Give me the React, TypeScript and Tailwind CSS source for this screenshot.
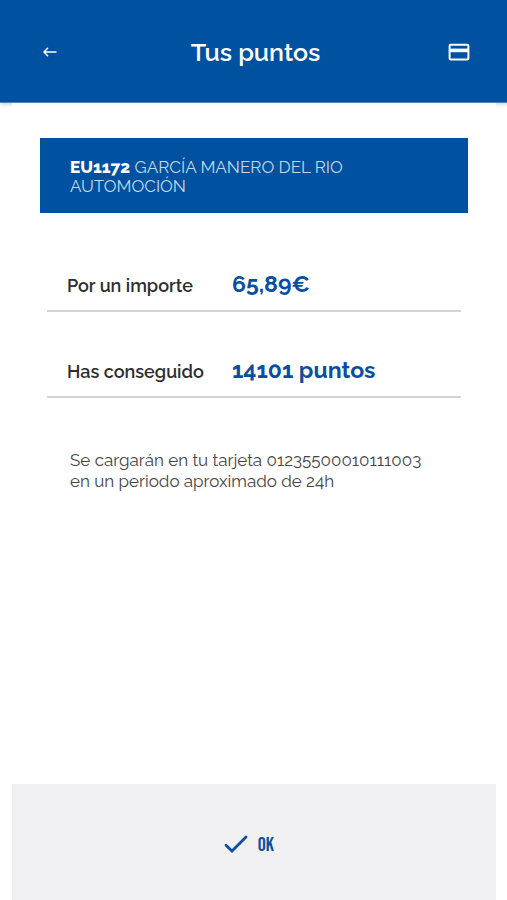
type AmountRowProps = {
  label: string;
  value: string;
};

function BackArrow() {
  return (
    <svg viewBox="0 0 14 12" className="h-3 w-3.5" fill="none" stroke="currentColor" strokeWidth="1.5" strokeLinecap="round" strokeLinejoin="round" aria-hidden="true">
      <path d="M13 6H1.2M4.6 2.2L1 6l3.6 3.8" />
    </svg>
  );
}

function CardIcon() {
  return (
    <svg viewBox="0 0 22 18" className="h-[18px] w-[22px]" aria-hidden="true">
      <rect x="1.6" y="1.8" width="18.8" height="14.6" rx="1.2" fill="none" stroke="currentColor" strokeWidth="2" />
      <path d="M1.6 5.6h18.8v3.6H1.6z" fill="currentColor" />
    </svg>
  );
}

function CheckIcon() {
  return (
    <svg viewBox="0 0 24 18" className="h-[18px] w-6" fill="none" stroke="currentColor" strokeWidth="2.8" strokeLinecap="round" aria-hidden="true">
      <path d="M2 10.2L8 16 22 2" />
    </svg>
  );
}

function AmountRow({ label, value }: AmountRowProps) {
  return (
    <div className="flex h-[86px] items-end border-b-2 border-[#d3d3d4] pb-2.5 pl-5">
      <dt className="w-[165px] text-lg leading-7 font-semibold text-[#2d2d2f]">{label}</dt>
      <dd className="text-[23px] leading-8 font-bold text-[#0a4f9e]">{value}</dd>
    </div>
  );
}

export default function App() {
  return (
    <div className="flex min-h-screen flex-col bg-white font-['Raleway','Lato',sans-serif]">
      <header className="flex h-[103px] items-center justify-between border-b border-[#4f86bd] bg-[#0052a1] px-9 pt-px text-white shadow-[0_2px_3px_rgba(0,0,0,0.15)]">
        <button type="button" aria-label="Volver" className="flex size-7 items-center justify-center">
          <BackArrow />
        </button>
        <h1 className="text-[25px] leading-8 font-semibold">Tus puntos</h1>
        <button type="button" aria-label="Tarjeta" className="flex h-7 w-6 items-center justify-center">
          <CardIcon />
        </button>
      </header>

      <main className="mr-[11px] ml-3 grow bg-white px-7 pt-[35px] pb-8">
        <h2 className="h-[75px] bg-[#0052a1] px-[30px] pt-5 text-[17px] leading-[19px] font-normal text-[#c3d7eb]">
          <strong className="font-extrabold text-white">EU1172</strong> GARCÍA MANERO DEL RIO
          <br />
          AUTOMOCIÓN
        </h2>

        <dl className="mx-[7px] mt-[13px]">
          <AmountRow label="Por un importe" value="65,89€" />
          <AmountRow label="Has conseguido" value="14101 puntos" />
        </dl>

        <p className="mt-[52px] px-[30px] text-[17px] leading-[21px] text-[#454547]">
          Se cargarán en tu tarjeta 01235500010111003
          <br />
          en un periodo aproximado de 24h
        </p>
      </main>

      <footer className="mr-[11px] ml-3 flex h-[116px] items-center justify-center bg-[#f0f0f2]">
        <button type="button" className="flex items-center gap-2.5 pt-1 pr-2.5 text-[#0d4f9c]">
          <CheckIcon />
          <span className="pt-0.5 font-['Bebas_Neue','Liberation_Sans_Narrow','Roboto_Condensed',sans-serif] text-xl leading-6">OK</span>
        </button>
      </footer>
    </div>
  );
}
